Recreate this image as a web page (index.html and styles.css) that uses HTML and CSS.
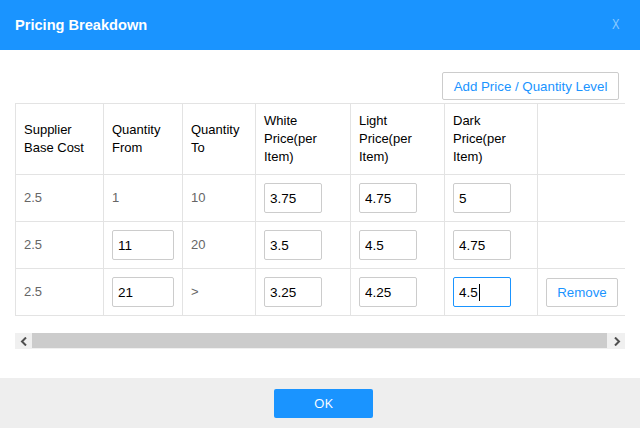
FILE: index.html
```html
<!DOCTYPE html>
<html>
<head>
<meta charset="utf-8">
<link rel="stylesheet" href="styles.css">
</head>
<body>
<div class="dialog">
  <header class="dialog-header">
    <h1 class="dialog-title">Pricing Breakdown</h1>
    <span class="dialog-close">X</span>
  </header>
  <main class="dialog-body">
    <div class="toolbar">
      <button class="btn-outline btn-add">Add Price / Quantity Level</button>
    </div>
    <div class="table-wrap">
      <table class="grid">
        <colgroup>
          <col class="c1"><col class="c2"><col class="c3"><col class="c4"><col class="c5"><col class="c6"><col class="c7">
        </colgroup>
        <thead>
          <tr>
            <th>Supplier<br>Base Cost</th>
            <th>Quantity<br>From</th>
            <th>Quantity<br>To</th>
            <th>White<br>Price(per<br>Item)</th>
            <th>Light<br>Price(per<br>Item)</th>
            <th>Dark<br>Price(per<br>Item)</th>
            <th></th>
          </tr>
        </thead>
        <tbody>
          <tr>
            <td>2.5</td>
            <td>1</td>
            <td>10</td>
            <td><input class="field price" value="3.75"></td>
            <td><input class="field price" value="4.75"></td>
            <td><input class="field price" value="5"></td>
            <td></td>
          </tr>
          <tr>
            <td>2.5</td>
            <td><input class="field qty" value="11"></td>
            <td>20</td>
            <td><input class="field price" value="3.5"></td>
            <td><input class="field price" value="4.5"></td>
            <td><input class="field price" value="4.75"></td>
            <td></td>
          </tr>
          <tr>
            <td>2.5</td>
            <td><input class="field qty" value="21"></td>
            <td>&gt;</td>
            <td><input class="field price" value="3.25"></td>
            <td><input class="field price" value="4.25"></td>
            <td><span class="focus-wrap"><input class="field price focused" value="4.5"><span class="caret"></span></span></td>
            <td><button class="btn-outline btn-remove">Remove</button></td>
          </tr>
        </tbody>
      </table>
    </div>
    <div class="hscroll">
      <span class="hs-btn"><svg width="8" height="9" viewBox="0 0 8 9"><path d="M6 0.5 L2 4.5 L6 8.5" fill="none" stroke="#505050" stroke-width="2"/></svg></span>
      <span class="hs-thumb"></span>
      <span class="hs-btn"><svg width="8" height="9" viewBox="0 0 8 9"><path d="M2 0.5 L6 4.5 L2 8.5" fill="none" stroke="#505050" stroke-width="2"/></svg></span>
    </div>
  </main>
  <footer class="dialog-footer">
    <button class="btn-ok">OK</button>
  </footer>
</div>
</body>
</html>
```
FILE: styles.css
```css
* { box-sizing: border-box; }
html, body { margin: 0; padding: 0; }
body {
  width: 640px;
  height: 428px;
  overflow: hidden;
  font-family: "Liberation Sans", Arial, sans-serif;
  font-size: 13px;
  color: #000;
  background: #fff;
}
.dialog { display: flex; flex-direction: column; height: 428px; }
.dialog-header {
  height: 50px;
  background: #1a94ff;
  display: flex;
  align-items: center;
  justify-content: space-between;
  padding: 0 20px 0 15px;
}
.dialog-title {
  margin: 0;
  font-size: 14.6px;
  font-weight: bold;
  color: #fff;
  padding-bottom: 1px;
}
.dialog-close {
  color: #8ccaff;
  font-family: "Liberation Sans", Arial, sans-serif;
  font-size: 14px;
  transform: scaleX(0.8);
  padding-bottom: 2px;
}
.dialog-body {
  flex: 1;
  padding: 22px 15px 0 15px;
}
.toolbar {
  display: flex;
  justify-content: flex-end;
  padding-right: 6px;
  margin-bottom: 3px;
}
.btn-outline {
  font-family: "Liberation Sans", Arial, sans-serif;
  font-size: 13.3px;
  color: #1a94ff;
  background: #fff;
  border: 1px solid #ccc;
  border-radius: 2px;
  cursor: pointer;
}
.btn-add { height: 28px; width: 177px; padding: 0; }
.btn-remove { height: 29px; width: 72px; padding: 0; }
.table-wrap { overflow: hidden; width: 610px; }
.grid {
  border-collapse: collapse;
  table-layout: fixed;
  width: 620px;
  margin-bottom: 17px;
}
.c1 { width: 88px; } .c2 { width: 79px; } .c3 { width: 73px; }
.c4 { width: 95px; } .c5 { width: 94px; } .c6 { width: 93px; } .c7 { width: 98px; }
.grid th, .grid td {
  border: 1px solid #e3e3e3;
  padding: 8px 8px;
  text-align: left;
  vertical-align: middle;
  line-height: 18px;
}
.grid th:last-child, .grid td:last-child { border-right: none; }
.grid th { font-weight: normal; color: #000; height: 71px; }
.grid td { color: #666; height: 47px; }
.field {
  display: block;
  height: 30px;
  border: 1px solid #ccc;
  border-radius: 2px;
  padding: 0 5px;
  font-family: "Liberation Sans", Arial, sans-serif;
  font-size: 13.5px;
  color: #000;
  background: #fff;
  outline: none;
}
.price { width: 58px; }
.qty { width: 62px; }
.focused { border-color: #1a94ff; }
.focus-wrap { position: relative; display: block; width: 58px; }
.caret {
  position: absolute;
  left: 25.5px;
  top: 7px;
  width: 1px;
  height: 17px;
  background: #000;
}
.hscroll {
  display: flex;
  height: 16px;
  width: 610px;
  background: #f0f0f0;
}
.hs-btn {
  width: 17px;
  display: flex;
  align-items: center;
  justify-content: center;
}
.hs-thumb { flex: 1; background: #cccccc; margin: 0 1px 1px 0; }
.dialog-footer {
  height: 50px;
  background: #eeeeee;
  display: flex;
  justify-content: center;
  align-items: center;
}
.btn-ok {
  width: 99px;
  height: 29px;
  margin-left: 7px;
  background: #1a94ff;
  border: none;
  border-radius: 2px;
  color: #fff;
  font-family: "Open Sans", sans-serif;
  font-weight: normal;
  font-size: 13.5px;
  padding: 0;
}
```
